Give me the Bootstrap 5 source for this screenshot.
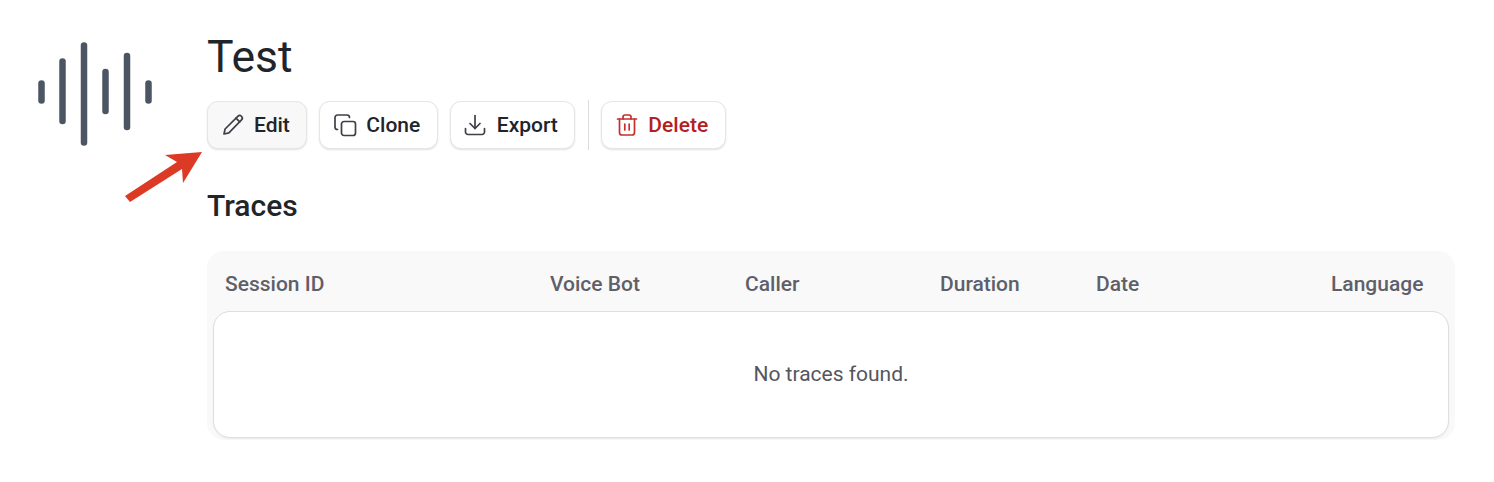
<!DOCTYPE html>
<html lang="en">
<head>
<meta charset="utf-8">
<title>Test</title>
<link href="https://cdn.jsdelivr.net/npm/bootstrap@5.3.0/dist/css/bootstrap.min.css" rel="stylesheet">
<style>
html,body{height:482px;overflow:hidden;}
body{font-family:Roboto,"Liberation Sans",sans-serif;background:#fff;color:#212529;position:relative;}
.page-wrap{padding:32px 39px 0 38px;}
.logo-col{width:114px;margin-right:55px;padding-top:10px;flex:none;}
.main-col{width:1248px;}
.page-title{font-size:44.500px;font-weight:400;line-height:50px;margin:0 0 18px;color:#212529;}
.act-btn{height:48px;font-size:21px;font-weight:500;color:#212529;background:#fff;border:1px solid #e6e6e8;border-radius:11px;box-shadow:0 1px 2px rgba(0,0,0,.12);padding:0 16.500px 0 12.500px;gap:9.500px;display:flex;align-items:center;line-height:1;}
.act-btn:hover{color:#212529;background:#fff;border-color:#e6e6e8;}
.act-btn.is-active,.act-btn.is-active:hover{background:#f8f8f8;}
.act-btn.danger,.act-btn.danger:hover{color:#b3201f;}
.btn-row{gap:12px;}
.vsep{width:1px;height:50px;background:#dcdcde;margin:0 0 0 1px;}
.sect-title{font-size:30px;font-weight:500;line-height:34px;margin:39px 0 28px;color:#212529;}
.trace-card{background:#f9f9f9;border-radius:17px;height:189px;padding:0 6px 2px 6px;}
.trace-head{height:60px;display:grid;grid-template-columns:325px 195px 195px 156px 235px auto;padding-left:12px;align-items:center;font-size:21px;font-weight:500;color:#5f5f69;padding-top:7px;}
.trace-body{height:127px;background:#fff;border:1px solid #dedee0;border-radius:17px;box-shadow:0 1px 2px rgba(0,0,0,.06);color:#55555e;font-size:21px;padding-top:1px;}
.overlay-arrow{position:absolute;left:120px;top:148px;}
</style>
</head>
<body>
<div class="page-wrap d-flex">
  <div class="logo-col">
    <svg width="114" height="104" viewBox="0 0 114 104" fill="none" stroke="#4b5563" stroke-width="6.5" stroke-linecap="round">
      <path d="M3.500 41.500V58.500"/>
      <path d="M24.500 19.500V79"/>
      <path d="M46 3.500V100.500"/>
      <path d="M67.500 30V69"/>
      <path d="M89 14V85"/>
      <path d="M110.500 41.500V58.500"/>
    </svg>
  </div>
  <div class="main-col">
    <h1 class="page-title">Test</h1>
    <div class="d-flex align-items-center btn-row">
      <button type="button" class="btn act-btn is-active">
        <svg width="24" height="24" viewBox="0 0 24 24" fill="none" stroke="#3f3f46" stroke-width="1.7" stroke-linecap="round" stroke-linejoin="round"><path d="M3 21l1.100-5L16.800 3.300a2.500 2.500 0 0 1 3.700 3.600L7.900 19.800 3 21z"/><path d="M15 5.200l3.700 3.700"/></svg>
        Edit
      </button>
      <button type="button" class="btn act-btn">
        <svg width="24" height="24" viewBox="0 0 24 24" fill="none" stroke="#3f3f46" stroke-width="1.7" stroke-linecap="round" stroke-linejoin="round"><rect x="8.500" y="8.500" width="14" height="14" rx="2.500"/><path d="M4.500 16.500A2.500 2.500 0 0 1 2 14V4.500A2.500 2.500 0 0 1 4.500 2H14a2.500 2.500 0 0 1 2.500 2.500"/></svg>
        Clone
      </button>
      <button type="button" class="btn act-btn">
        <svg width="24" height="24" viewBox="0 0 24 24" fill="none" stroke="#3f3f46" stroke-width="1.7" stroke-linecap="round" stroke-linejoin="round"><path d="M2.500 15.500V19a2.500 2.500 0 0 0 2.500 2.500h14a2.500 2.500 0 0 0 2.500-2.500v-3.500"/><path d="M12 2.500V15.500"/><path d="M7 10.500l5 5 5-5"/></svg>
        Export
      </button>
      <div class="vsep"></div>
      <button type="button" class="btn act-btn danger">
        <svg width="24" height="24" viewBox="0 0 24 24" fill="none" stroke="#c5302e" stroke-width="1.7" stroke-linecap="round" stroke-linejoin="round"><path d="M2.500 6h19"/><path d="M8 6V4a2 2 0 0 1 2-2h4a2 2 0 0 1 2 2v2"/><path d="M4.500 6v13.500A2.500 2.500 0 0 0 7 22h10a2.500 2.500 0 0 0 2.500-2.500V6"/><path d="M9.800 11v6"/><path d="M14.200 11v6"/></svg>
        Delete
      </button>
    </div>
    <h2 class="sect-title">Traces</h2>
    <div class="trace-card">
      <div class="trace-head">
        <div>Session ID</div><div>Voice Bot</div><div>Caller</div><div>Duration</div><div>Date</div><div>Language</div>
      </div>
      <div class="trace-body d-flex align-items-center justify-content-center">No traces found.</div>
    </div>
  </div>
</div>
<svg class="overlay-arrow" width="86" height="58" viewBox="120 148 86 58"><polygon fill="#dd3a25" points="125,196 130,202 182,169 183,183 202,152 165,155 177,162"/></svg>
</body>
</html>
